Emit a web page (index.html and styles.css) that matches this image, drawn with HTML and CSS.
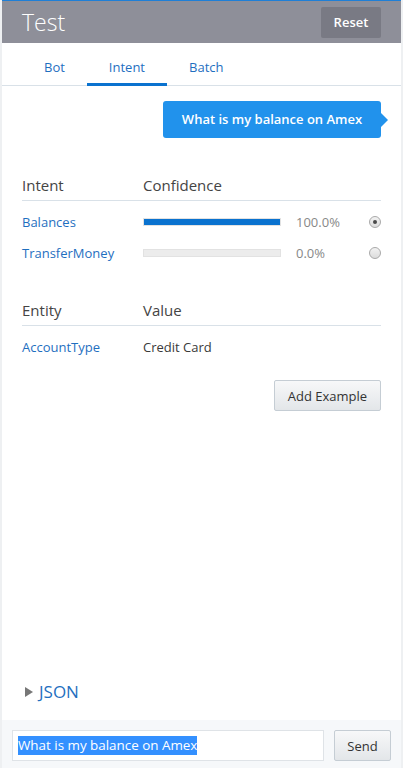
FILE: index.html
```html
<!DOCTYPE html>
<html>
<head>
<meta charset="utf-8">
<link rel="stylesheet" href="styles.css">
</head>
<body>
<div class="panel">
  <header class="header">
    <div class="title">Test</div>
    <button class="reset">Reset</button>
  </header>
  <nav class="tabs">
    <div class="tab">Bot</div>
    <div class="tab active">Intent</div>
    <div class="tab">Batch</div>
  </nav>
  <main class="content">
    <div class="bubble-row">
      <div class="bubble">What is my balance on Amex</div>
    </div>
    <div class="table intents">
      <div class="thead"><span>Intent</span><span>Confidence</span></div>
      <div class="row">
        <span class="link">Balances</span>
        <span class="bar"><span class="fill" style="width:100%"></span></span>
        <span class="pct">100.0%</span>
        <span class="radio checked"></span>
      </div>
      <div class="row">
        <span class="link">TransferMoney</span>
        <span class="bar"><span class="fill" style="width:0%"></span></span>
        <span class="pct">0.0%</span>
        <span class="radio"></span>
      </div>
    </div>
    <div class="table entities">
      <div class="thead"><span>Entity</span><span>Value</span></div>
      <div class="row">
        <span class="link">AccountType</span>
        <span class="value">Credit Card</span>
      </div>
    </div>
    <div class="actions">
      <button class="btn add">Add Example</button>
    </div>
    <div class="json">
      <span class="tri"></span><span class="json-label">JSON</span>
    </div>
  </main>
  <footer class="footer">
    <div class="input"><span class="sel">What is my balance on Amex</span></div>
    <button class="btn send">Send</button>
  </footer>
</div>
</body>
</html>
```
FILE: styles.css
```css
html, body {
  margin: 0;
  padding: 0;
  height: 100%;
}
body {
  background: #eef0f2;
  font-family: "Open Sans", "Liberation Sans", sans-serif;
  overflow: hidden;
}
.panel {
  box-sizing: border-box;
  margin-left: 2px;
  width: 399px;
  height: 768px;
  background: #ffffff;
  border-top: 1px solid #1f7fd6;
  display: flex;
  flex-direction: column;
}
.header {
  height: 42px;
  background: #8e8f99;
  display: flex;
  align-items: center;
  justify-content: space-between;
  padding: 0 20px;
}
.title {
  color: #ffffff;
  font-size: 23px;
  font-weight: 300;
  line-height: 30px;
  margin-top: 0;
}
.reset {
  font-family: inherit;
  background: #797a84;
  color: #ffffff;
  border: none;
  border-radius: 2px;
  width: 60px;
  height: 31px;
  font-size: 13px;
  font-weight: 600;
  padding: 0;
}
.tabs {
  height: 42px;
  border-bottom: 1px solid #d9e1e8;
  display: flex;
  padding: 0 20px;
}
.tab {
  padding: 14px 22px 0;
  line-height: 20px;
  font-size: 13px;
  color: #1f6fbf;
  box-sizing: border-box;
  height: 43px;
}
.tab.active {
  border-bottom: 3px solid #0a72cf;
}
.content {
  flex: 1;
  display: flex;
  flex-direction: column;
  padding: 0 20px;
}
.bubble-row {
  display: flex;
  justify-content: flex-end;
  margin-top: 15px;
}
.bubble {
  position: relative;
  background: #2192ec;
  color: #ffffff;
  font-size: 13px;
  font-weight: 600;
  height: 37px;
  line-height: 37px;
  width: 218px;
  text-align: center;
  border-radius: 3px;
}
.bubble::after {
  content: "";
  position: absolute;
  right: -7px;
  top: 12px;
  border-left: 7px solid #2192ec;
  border-top: 7px solid transparent;
  border-bottom: 7px solid transparent;
}
.table .thead {
  display: grid;
  grid-template-columns: 121px 1fr;
  height: 30px;
  line-height: 30px;
  font-size: 15px;
  color: #444444;
  border-bottom: 1px solid #d9e1e8;
}
.table .row {
  display: grid;
  grid-template-columns: 121px 153px 1fr 12px;
  align-items: center;
  height: 31px;
  font-size: 13px;
}
.thead + .row {
  margin-top: 5px;
}
.intents {
  margin-top: 32px;
}
.entities {
  margin-top: 27px;
}
.entities .row {
  grid-template-columns: 121px 1fr;
}
.link {
  color: #1f6fbf;
}
.value {
  color: #3a3a3a;
}
.bar {
  display: block;
  width: 138px;
  height: 8px;
  background: #ececec;
  border: 1px solid #e2e2e2;
  box-sizing: border-box;
  margin-top: 1px;
}
.fill {
  display: block;
  height: 100%;
  background: #0a72cf;
}
.pct {
  color: #888888;
}
.radio {
  width: 12px;
  height: 12px;
  box-sizing: border-box;
  border-radius: 50%;
  border: 1px solid #a9a9a9;
  background: linear-gradient(#f2f2f2, #dcdcdc);
  position: relative;
}
.radio.checked::after {
  content: "";
  position: absolute;
  left: 3px;
  top: 3px;
  width: 4px;
  height: 4px;
  border-radius: 50%;
  background: #4a4a4a;
}
.actions {
  display: flex;
  justify-content: flex-end;
  margin-top: 18px;
}
.btn {
  font-family: inherit;
  font-size: 13px;
  color: #333333;
  background: linear-gradient(#f7f8f9, #e3e6e9);
  border: 1px solid #c5cdd4;
  border-radius: 2px;
  height: 31px;
  padding: 0;
}
.add {
  width: 107px;
}
.json {
  margin-top: auto;
  margin-bottom: 17px;
  display: flex;
  align-items: center;
  height: 22px;
}
.tri {
  width: 0;
  height: 0;
  border-left: 8px solid #777777;
  border-top: 5.5px solid transparent;
  border-bottom: 5.5px solid transparent;
  margin-left: 3px;
  margin-right: 6px;
}
.json-label {
  color: #1f6fbf;
  font-size: 17px;
  line-height: 22px;
}
.footer {
  height: 48px;
  box-sizing: border-box;
  background: #f6f8fa;
  padding: 10px 10px 0;
  display: flex;
  gap: 10px;
}
.input {
  flex: 1;
  height: 31px;
  box-sizing: border-box;
  background: #ffffff;
  border: 1px solid #dfe3e7;
  padding: 0 5px;
  display: flex;
  align-items: center;
}
.sel {
  background: #3390ff;
  color: #ffffff;
  font-size: 13.4px;
  line-height: 19px;
}
.send {
  width: 57px;
}
```
